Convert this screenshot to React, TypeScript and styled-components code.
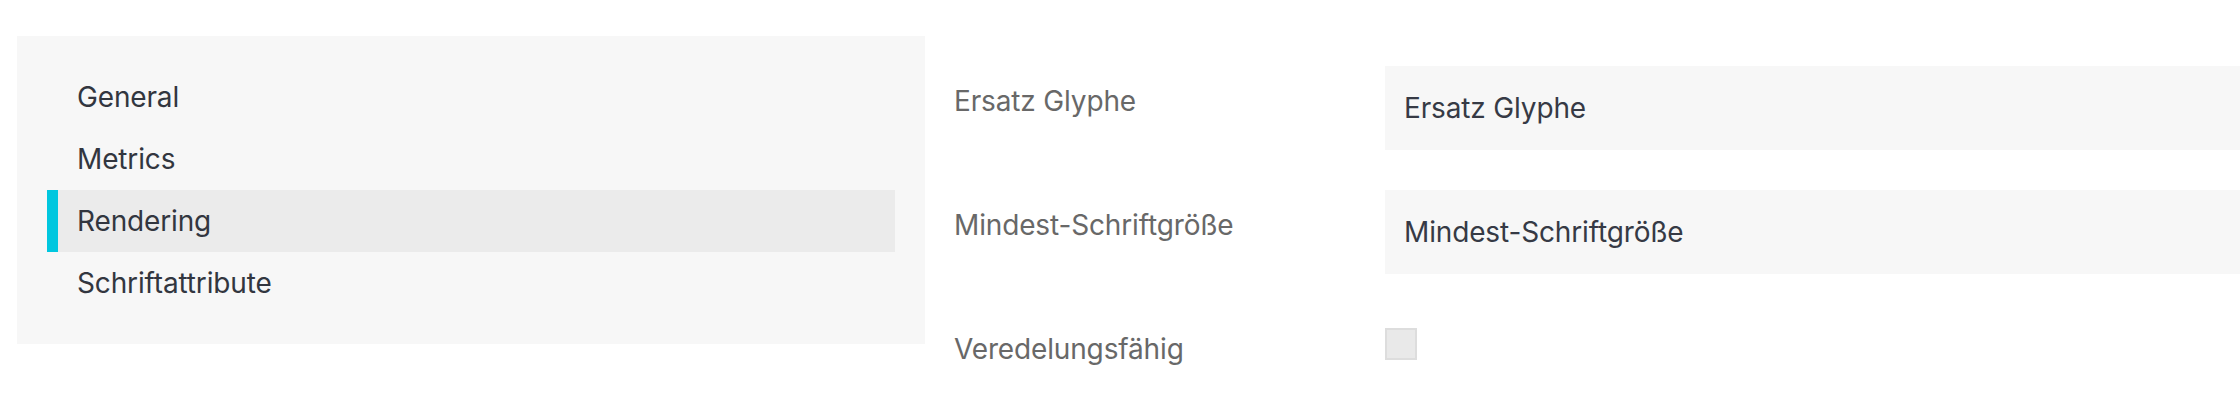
import React from "react";
import styled, { createGlobalStyle } from "styled-components";

const GlobalStyle = createGlobalStyle`
  html, body {
    margin: 0;
    padding: 0;
    background: #ffffff;
  }
  body {
    font-family: Inter, "Noto Sans", "Liberation Sans", sans-serif;
    -webkit-font-smoothing: antialiased;
  }
  * { box-sizing: border-box; }
`;

const Page = styled.div`
  display: flex;
  align-items: flex-start;
  padding: 36px 0 0 17px;
  width: 2240px;
  height: 410px;
  overflow: hidden;
`;

const Sidebar = styled.nav`
  flex: 0 0 908px;
  width: 908px;
  background: #f7f7f7;
  padding: 30px 30px 30px 30px;
  display: flex;
  flex-direction: column;
`;

const NavItem = styled.div<{ $active?: boolean }>`
  height: 62px;
  display: flex;
  align-items: center;
  border-left: 11px solid ${(p) => (p.$active ? "#00c7df" : "transparent")};
  background: ${(p) => (p.$active ? "#ebebeb" : "transparent")};
  padding-left: 19px;
  font-size: 28px;
  line-height: 40px;
  letter-spacing: -0.15px;
  color: #32363f;
  cursor: pointer;
`;

const Form = styled.div`
  flex: 1 1 auto;
  margin: 30px 0 0 29px;
  display: grid;
  grid-template-columns: 431px 1fr;
  row-gap: 40px;
  min-width: 0;
`;

const Label = styled.label`
  padding-top: 15px;
  font-size: 28px;
  line-height: 40px;
  letter-spacing: -0.15px;
  color: #686868;
`;

const TextField = styled.input`
  display: block;
  width: 100%;
  height: 84px;
  border: none;
  outline: none;
  background: #f7f7f7;
  padding: 0 18px 0 19px;
  font-family: inherit;
  font-size: 28px;
  line-height: 40px;
  letter-spacing: -0.15px;
  color: #363a45;
`;

const CheckCell = styled.div`
  padding-top: 14px;
`;

const Checkbox = styled.input`
  appearance: none;
  -webkit-appearance: none;
  display: block;
  margin: 0;
  width: 32px;
  height: 32px;
  background: #e9e9e9;
  border: 2px solid #dddddd;
  border-radius: 0;
  cursor: pointer;
`;

const navItems = ["General", "Metrics", "Rendering", "Schriftattribute"];

export default function App() {
  return (
    <>
      <GlobalStyle />
      <Page>
        <Sidebar>
          {navItems.map((item) => (
            <NavItem key={item} $active={item === "Rendering"}>
              {item}
            </NavItem>
          ))}
        </Sidebar>
        <Form>
          <Label htmlFor="ersatz">Ersatz Glyphe</Label>
          <TextField id="ersatz" readOnly defaultValue="Ersatz Glyphe" />
          <Label htmlFor="mindest">Mindest-Schriftgröße</Label>
          <TextField id="mindest" readOnly defaultValue="Mindest-Schriftgröße" />
          <Label htmlFor="veredelung">Veredelungsfähig</Label>
          <CheckCell>
            <Checkbox id="veredelung" type="checkbox" />
          </CheckCell>
        </Form>
      </Page>
    </>
  );
}
